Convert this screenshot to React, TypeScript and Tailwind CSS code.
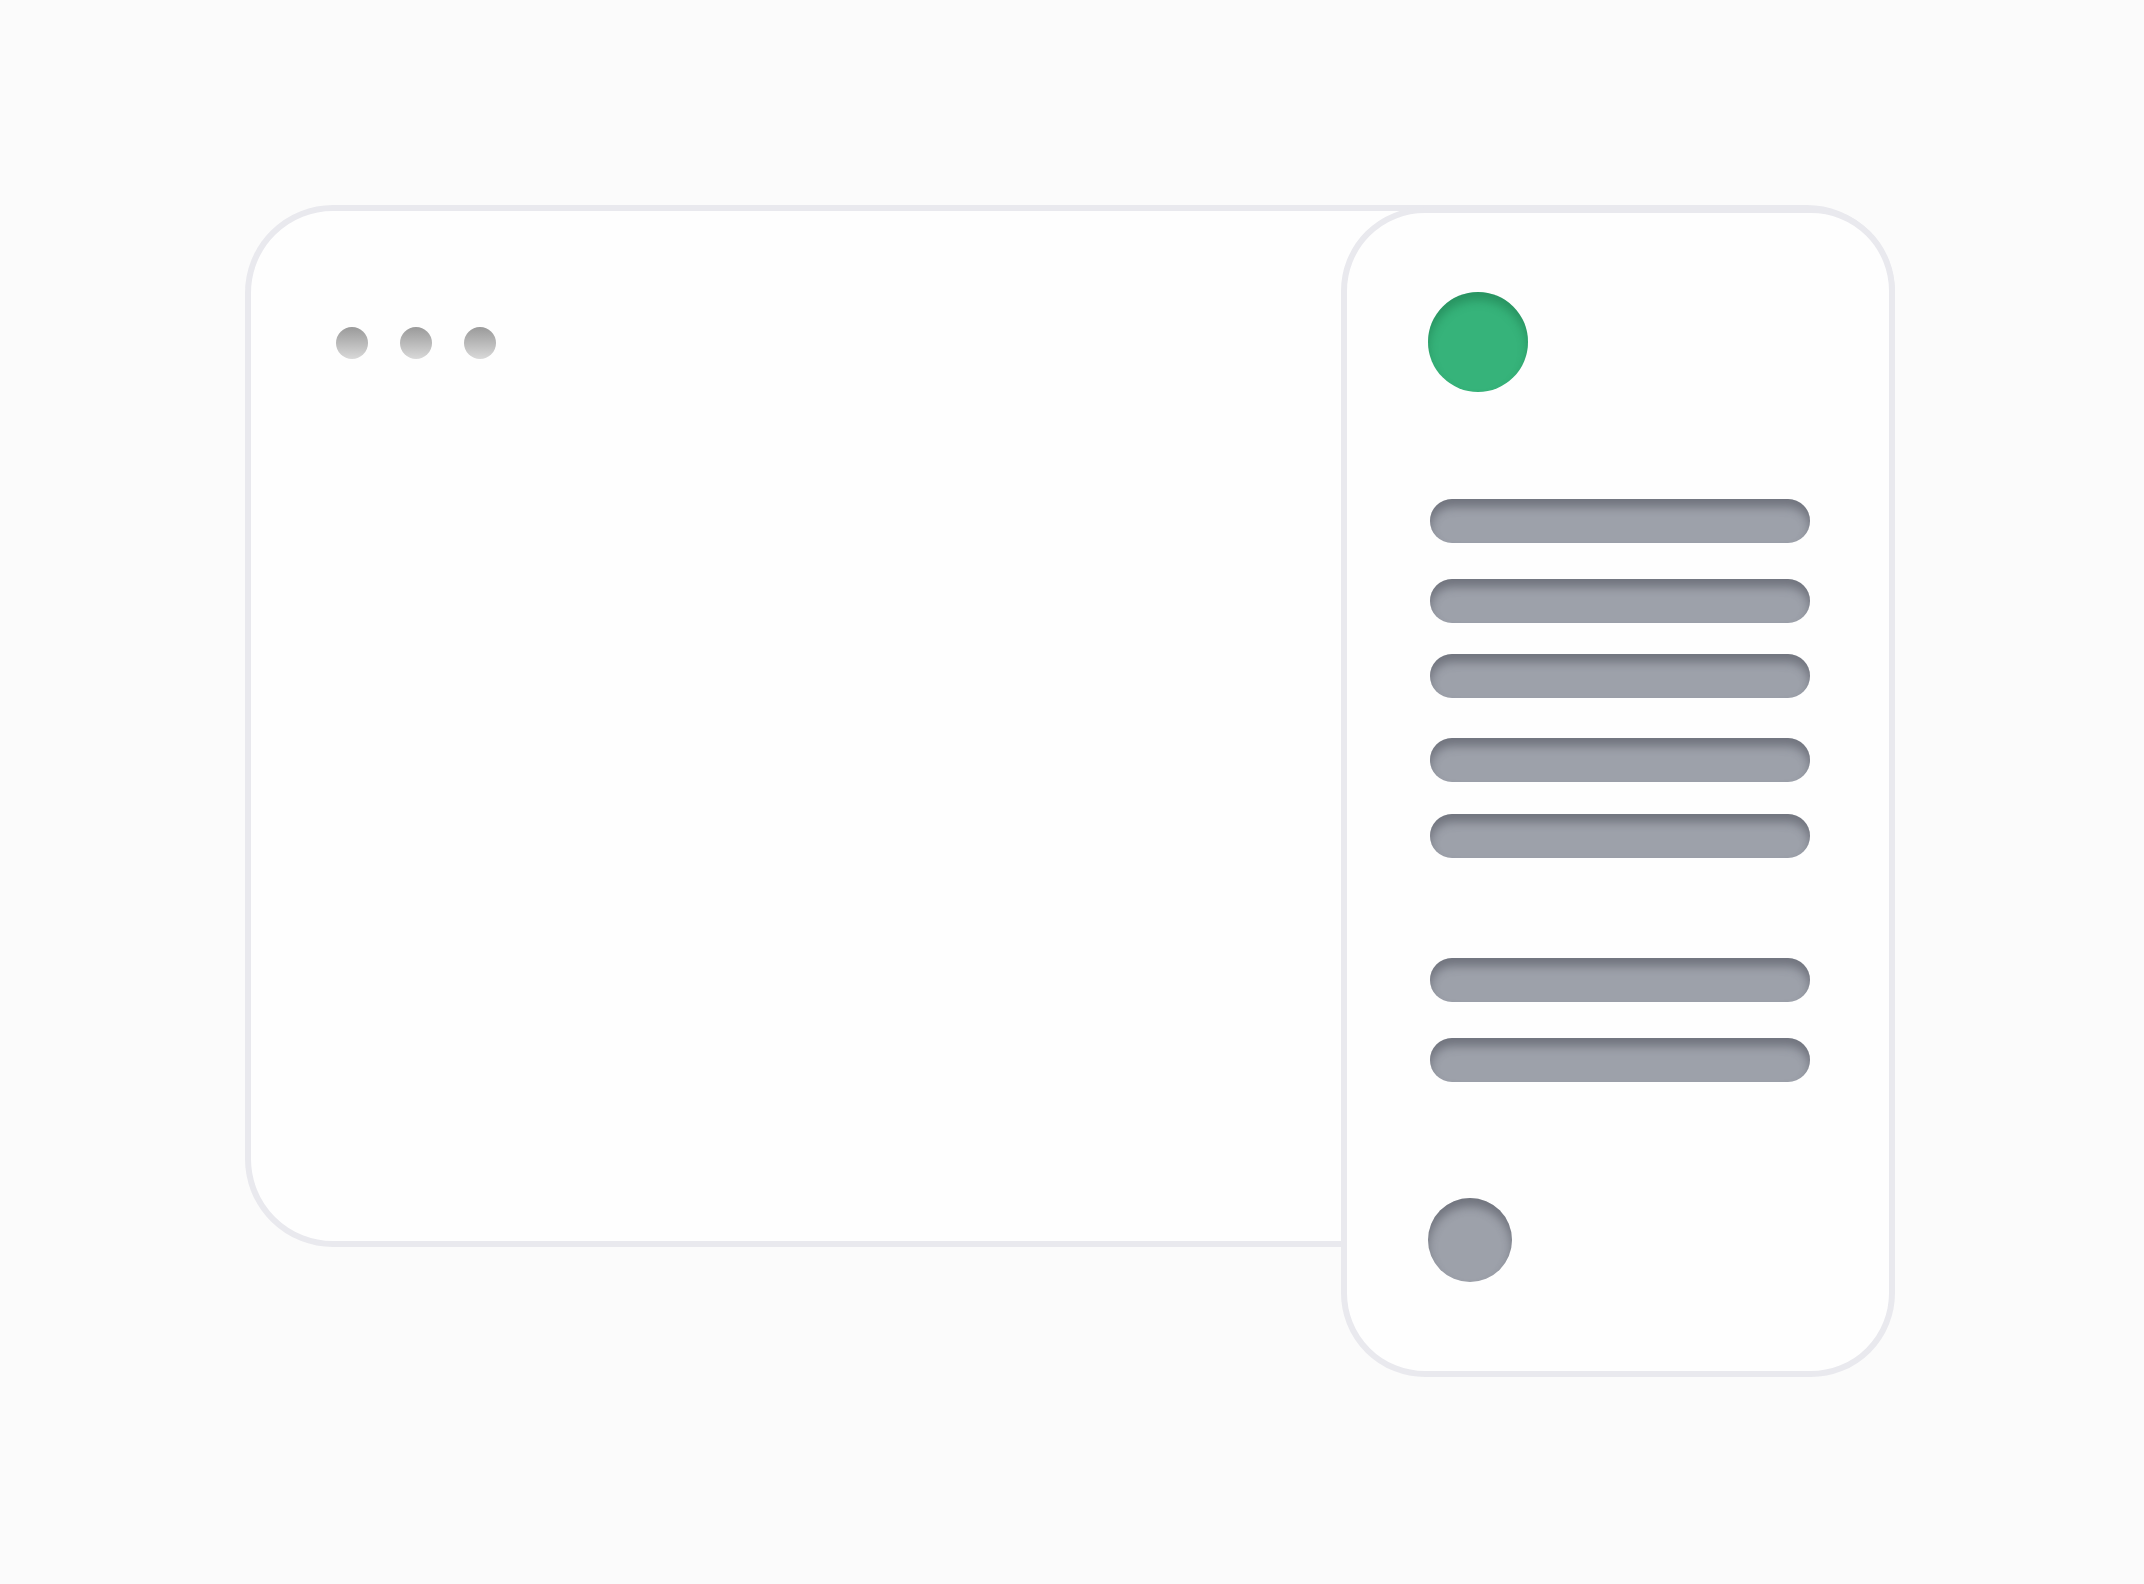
export default function App() {
  const bar =
    'ml-[2px] h-[44px] w-[380px] rounded-full bg-[#9da1aa] shadow-[inset_0_8px_10px_rgba(60,63,74,0.45)]'

  return (
    <div className="min-h-screen w-full bg-[#fbfbfb] pl-[245px] pt-[205px]">
      <div className="relative w-[1650px]">
        {/* Window card */}
        <div className="h-[1042px] w-[1650px] rounded-[88px] border-[6px] border-[#e9e9ee] bg-[#fefefe] pl-[85px] pt-[116px]">
          <div className="flex gap-[32px]">
            <div className="h-[32px] w-[32px] rounded-full bg-linear-to-b from-[#9a9a9a] to-[#d9d9d9]" />
            <div className="h-[32px] w-[32px] rounded-full bg-linear-to-b from-[#9a9a9a] to-[#d9d9d9]" />
            <div className="h-[32px] w-[32px] rounded-full bg-linear-to-b from-[#9a9a9a] to-[#d9d9d9]" />
          </div>
        </div>

        {/* Side panel, sits over the card */}
        <div className="absolute left-[1096px] top-[2px] flex h-[1170px] w-[554px] flex-col rounded-[84px] border-[6px] border-[#e9e9ee] bg-[#fefefe] pl-[81px] pt-[79px]">
          <div className="h-[100px] w-[100px] rounded-full bg-[#36b37a] shadow-[inset_0_8px_10px_rgba(20,100,60,0.4)]" />
          <div className="mt-[107px] flex flex-col">
            <div className={bar} />
            <div className={'mt-[36px] ' + bar} />
            <div className={'mt-[31px] ' + bar} />
            <div className={'mt-[40px] ' + bar} />
            <div className={'mt-[32px] ' + bar} />
            <div className={'mt-[100px] ' + bar} />
            <div className={'mt-[36px] ' + bar} />
          </div>
          <div className="mt-[116px] h-[84px] w-[84px] rounded-full bg-[#9da1aa] shadow-[inset_0_8px_10px_rgba(60,63,74,0.45)]" />
        </div>
      </div>
    </div>
  )
}
